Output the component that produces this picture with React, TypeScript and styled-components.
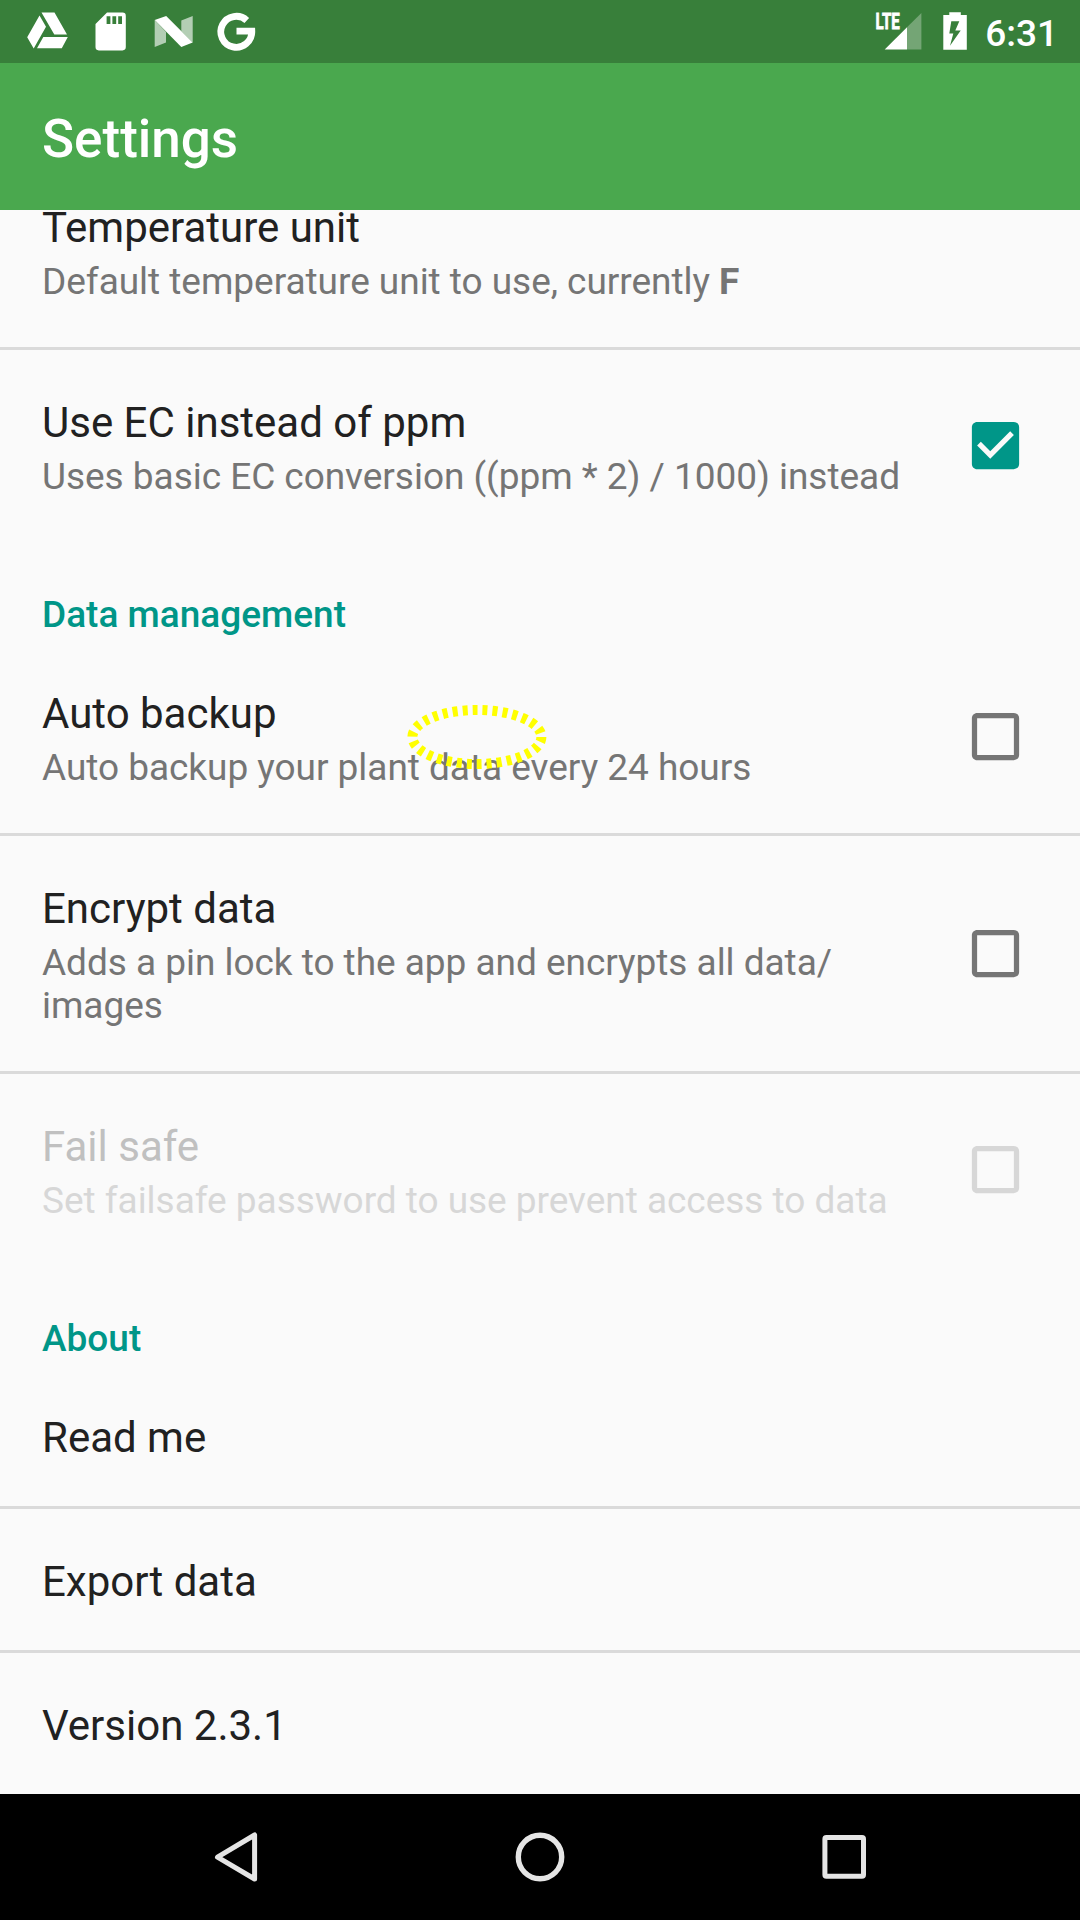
import React from "react";
import styled, { createGlobalStyle } from "styled-components";

const Global = createGlobalStyle`
  * { box-sizing: border-box; }
  body { margin: 0; background: #fafafa; }
`;
const Screen = styled.div`
  width: 1080px; height: 1920px; display: flex; flex-direction: column; overflow: hidden;
  background: #fafafa; font-family: Roboto, "Noto Sans", sans-serif; color: #212121;
`;
const StatusBar = styled.header`
  flex: none; height: 63px; background: #387f3a; display: flex; align-items: center;
  justify-content: space-between; padding: 0 22px 0 22px; color: #fff;
`;
const StatusGroup = styled.div<{ $gap: number }>`
  display: flex; align-items: center; height: 63px; gap: ${(p) => p.$gap}px;
`;
const Clock = styled.span`
  font-size: 37px; font-weight: 500; line-height: 43px; padding-top: 3px;
`;
const Toolbar = styled.div`
  flex: none; height: 147px; background: #4aa84e; display: flex; align-items: center; padding: 5px 42px 0;
`;
const Heading = styled.h1`
  margin: 0; color: #fff; font-size: 53px; font-weight: 500; line-height: 62px;
`;
const List = styled.main`
  flex: 1; min-height: 0; display: flex; flex-direction: column;
`;
const Row = styled.section<{ $divider?: boolean; $scrolled?: boolean }>`
  flex: none; display: flex; align-items: center; padding: 42px 53px 42px 42px;
  ${(p) => p.$scrolled && "margin-top: -55px;"}
  border-bottom: ${(p) => (p.$divider ? "3px solid #dadada" : "none")};
`;
const Texts = styled.div`flex: 1; min-width: 0; padding-right: 50px;`;
const Title = styled.div<{ $disabled?: boolean }>`
  font-size: 42px; line-height: 57px; height: 57px; padding-top: 2px;
  color: ${(p) => (p.$disabled ? "#c0c0c0" : "#212121")};
`;
const Summary = styled.div<{ $disabled?: boolean }>`
  font-size: 37px; line-height: 43px; padding: 6px 0 2px; letter-spacing: -0.035px;
  color: ${(p) => (p.$disabled ? "#d7d7d7" : "#757575")};
`;
const Category = styled.h2`
  flex: none; margin: 0; height: 99px; padding: 51px 42px 0; font-size: 37px; font-weight: 500;
  line-height: 43px; color: #009688;
`;
const NavBar = styled.nav`
  flex: none; height: 126px; background: #000; display: flex; justify-content: center; align-items: center;
`;
const NavButton = styled.div`
  width: 304px; height: 126px; display: flex; justify-content: center; align-items: center;
`;
const Anchor = styled.div`position: relative;`;
const TouchMark = styled.svg`position: absolute; left: 365px; top: 20px; overflow: visible;`;
const CheckIcon = styled.svg`flex: none; margin-bottom: 1px;`;

const Check = ({ on, disabled }: { on?: boolean; disabled?: boolean }) => (
  <CheckIcon width="63" height="63" viewBox="0 0 24 24">
    <path
      fill={on ? "#009688" : disabled ? "#d7d7d7" : "#757575"}
      d={
        on
          ? "M19 3H5c-1.11 0-2 .9-2 2v14c0 1.1.89 2 2 2h14c1.11 0 2-.9 2-2V5c0-1.1-.89-2-2-2zm-9 14l-5-5 1.41-1.41L10 14.17l7.59-7.59L19 8l-9 9z"
          : "M19 5v14H5V5h14m0-2H5c-1.1 0-2 .9-2 2v14c0 1.1.9 2 2 2h14c1.1 0 2-.9 2-2V5c0-1.1-.9-2-2-2z"
      }
    />
  </CheckIcon>
);

type ItemProps = {
  title: string; summary?: React.ReactNode; check?: boolean; disabled?: boolean; divider?: boolean; scrolled?: boolean;
};
const Item = ({ title, summary, check, disabled, divider, scrolled }: ItemProps) => (
  <Row $divider={divider} $scrolled={scrolled}>
    <Texts>
      <Title $disabled={disabled}>{title}</Title>
      {summary && <Summary $disabled={disabled}>{summary}</Summary>}
    </Texts>
    {check !== undefined && <Check on={check} disabled={disabled} />}
  </Row>
);

export default function App() {
  return (
    <Screen>
      <Global />
      <StatusBar>
        <svg width="240" height="63" viewBox="22 0 240 63" fill="#fff">
          <path d="M41.5 12.6H54.5L67 34.6H54.3zM39.5 15.5L46 26.7 33.7 48.4 27.2 37.2zM43.3 37H67.8L61.8 48.3H37z" />
          <path fillRule="evenodd" d="M107 12.6h15.5q3.3 0 3.3 3.3v31.2q0 3.3-3.3 3.3H98.8q-3.3 0-3.3-3.3V24zM106.6 16.3v7.7h3.8v-7.7zM112.4 16.3v7.7h3.8v-7.7zM118.2 16.3v7.7h3.8v-7.7z" />
          <path opacity=".62" d="M154.7 20L166 32V42.5L154.7 47zM181.3 20.6L192.7 16V42.5L181.3 31.2z" />
          <path d="M154.7 20L166.2 16 192.7 42.5 181.3 47z" />
          <path fill="none" stroke="#fff" strokeWidth="6.8" d="M246.8 20.4A15.5 15.5 0 1 0 251.8 31.2H236.5" />
        </svg>
        <StatusGroup $gap={18}>
          <svg width="92" height="63" viewBox="875 0 92 63" fill="#fff">
            <text x="875.6" y="29" fontSize="21.5" fontWeight="700" stroke="#fff" strokeWidth=".8" textLength="24.2" lengthAdjust="spacingAndGlyphs">LTE</text>
            <path d="M884.7 49.5L907 27.3V49.5z" />
            <path opacity=".3" d="M907 27.3L921.4 13V49.5H907z" />
            <path fillRule="evenodd" d="M943.3 15h6V12.3h11.5V15h6V49.7h-23.5zM951.3 21.3L949.3 33.5H953.3L950 45.7 960.7 30.6H955.3L959.3 21.3z" />
          </svg>
          <Clock>6:31</Clock>
        </StatusGroup>
      </StatusBar>
      <Toolbar><Heading>Settings</Heading></Toolbar>
      <List>
        <Item scrolled divider title="Temperature unit" summary={<>Default temperature unit to use, currently <b>F</b></>} />
        <Item title="Use EC instead of ppm" summary="Uses basic EC conversion ((ppm * 2) / 1000) instead" check />
        <Category>Data management</Category>
        <Anchor>
          <Item divider title="Auto backup" summary="Auto backup your plant data every 24 hours" check={false} />
          <TouchMark width="224" height="104">
            <ellipse cx="111.9" cy="76" rx="64.5" ry="27" fill="none" stroke="#ff0" strokeWidth="10" strokeDasharray="5 5" />
          </TouchMark>
        </Anchor>
        <Item divider title="Encrypt data" summary={<>Adds a pin lock to the app and encrypts all data/<br />images</>} check={false} />
        <Item disabled title="Fail safe" summary="Set failsafe password to use prevent access to data" check={false} />
        <Category>About</Category>
        <Item divider title="Read me" />
        <Item divider title="Export data" />
        <Item title="Version 2.3.1" />
      </List>
      <NavBar>
        <NavButton>
          <svg width="60" height="60" viewBox="206 1827 60 60" fill="none" stroke="#e5e5e5" strokeWidth="5" strokeLinejoin="round">
            <path d="M254.6 1835V1879L217.5 1857.2z" />
          </svg>
        </NavButton>
        <NavButton>
          <svg width="60" height="60" viewBox="510 1827 60 60" fill="none" stroke="#e5e5e5" strokeWidth="5.4">
            <circle cx="540" cy="1857" r="21.7" />
          </svg>
        </NavButton>
        <NavButton>
          <svg width="60" height="60" viewBox="814 1827 60 60" fill="none" stroke="#e5e5e5" strokeWidth="5">
            <rect x="824.9" y="1837.6" width="38.6" height="38.6" rx="1.5" />
          </svg>
        </NavButton>
      </NavBar>
    </Screen>
  );
}
